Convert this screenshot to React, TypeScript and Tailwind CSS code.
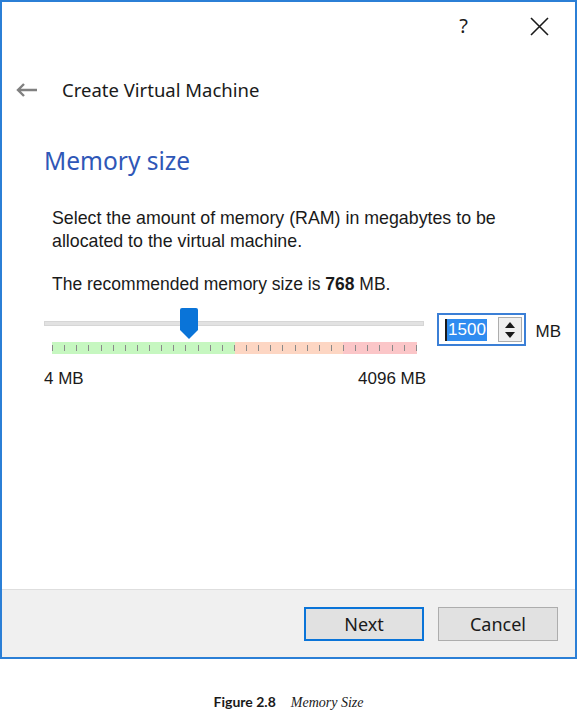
import React from 'react';

const ticks = Array.from({ length: 31 }, (_, i) => i);

const App: React.FC = () => {
  return (
    <div className="w-[577px] h-[710px] bg-white overflow-hidden">
      {/* Dialog window */}
      <div className="w-[577px] h-[659px] border-2 border-[#2b7fd6] flex flex-col bg-white">
        {/* Title bar */}
        <div className="h-[50px] flex items-start justify-end pr-[26px] pt-[12px] gap-[62px] text-[#1a1a1a]">
          <span className="font-['Noto_Sans',sans-serif] text-[20px] leading-[24px]">?</span>
          <svg width="19" height="19" viewBox="0 0 19 19" className="mt-[3px]">
            <path d="M1 1 L18 18 M18 1 L1 18" stroke="#1a1a1a" strokeWidth="1.6" fill="none" />
          </svg>
        </div>

        {/* Header */}
        <div className="flex items-center h-[30px] mt-[23px] pl-[13px]">
          <svg width="23" height="16" viewBox="0 0 23 16">
            <path d="M22 8 H3 M9 2 L3 8 L9 14" stroke="#808080" strokeWidth="2.4" fill="none" />
          </svg>
          <span className="ml-[24px] font-['Noto_Sans',sans-serif] text-[18.5px] text-[#1a1a1a]">Create Virtual Machine</span>
        </div>

        {/* Page body */}
        <div className="flex-1 flex flex-col pl-[42px] pr-[14px]">
          <h1 className="mt-[40px] font-['Noto_Sans',sans-serif] text-[24.5px] leading-[32px] text-[#2f57b7]">Memory size</h1>

          <div className="pl-[8px] mt-[30px] font-['Liberation_Sans',sans-serif] text-[17.8px] leading-[23px] text-[#1a1a1a]">
            <p>Select the amount of memory (RAM) in megabytes to be<br />allocated to the virtual machine.</p>
            <p className="mt-[20px] text-[17.5px]">The recommended memory size is <b>768</b> MB.</p>
          </div>

          {/* Slider row */}
          <div className="flex items-start mt-[12px]">
            <div className="w-[385px] flex flex-col">
              <div className="relative h-[34px]">
                <div className="absolute left-0 right-[2px] top-[13px] h-[5px] bg-[#e2e2e2] border border-[#d6d6d6]" />
                <svg width="20" height="31" viewBox="0 0 20 31" className="absolute left-[135px] top-0">
                  <path d="M1 2 Q1 0 3 0 H17 Q19 0 19 2 V22 L10 31 L1 22 Z" fill="#0a74d8" />
                </svg>
              </div>
              <div className="ml-[8px] w-[365px] h-[12px] flex">
                <div className="w-[183px] bg-[#c6f7c0]" />
                <div className="w-[108px] bg-[#fdd6c3]" />
                <div className="flex-1 bg-[#fbc6c8]" />
              </div>
              <div className="ml-[8px] w-[365px] h-[12px] -mt-[12px] flex justify-between items-center">
                {ticks.map(i => (
                  <div key={i} className="w-px h-[6px] bg-[#8a8a8a]" />
                ))}
              </div>
              <div className="flex justify-between mt-[12px] font-['Liberation_Sans',sans-serif] text-[17px] text-[#1a1a1a]">
                <span>4 MB</span>
                <span>4096 MB</span>
              </div>
            </div>

            <div className="ml-[11px] mt-[5px] w-[89px] h-[33px] border-2 border-[#3b7fd6] flex items-center pl-[6px] pr-[2px]">
              <span className="bg-[#2f8cf0] text-white font-['Liberation_Sans',sans-serif] text-[17px] leading-[22px] px-[1px] border-l-2 border-[#1a1a1a]">1500</span>
              <div className="ml-auto w-[24px] h-[25px] border border-[#adadad] bg-[#f0f0f0] flex flex-col items-center justify-center gap-[4px]">
                <svg width="10" height="6" viewBox="0 0 10 6"><path d="M0 6 L5 0 L10 6 Z" fill="#1a1a1a" /></svg>
                <svg width="10" height="6" viewBox="0 0 10 6"><path d="M0 0 L5 6 L10 0 Z" fill="#1a1a1a" /></svg>
              </div>
            </div>
            <span className="ml-[10px] mt-[11px] font-['Liberation_Sans',sans-serif] text-[17px] text-[#1a1a1a]">MB</span>
          </div>
        </div>

        {/* Footer */}
        <div className="h-[68px] bg-[#f0f0f0] border-t border-[#dedede] flex items-start justify-end gap-[14px] pr-[17px] pt-[17px]">
          <button className="w-[120px] h-[34px] bg-[#e1e1e1] border-2 border-[#0a74d8] font-['Noto_Sans',sans-serif] text-[18px] text-[#1a1a1a]">Next</button>
          <button className="w-[120px] h-[34px] bg-[#e1e1e1] border border-[#adadad] font-['Noto_Sans',sans-serif] text-[18px] text-[#1a1a1a]">Cancel</button>
        </div>
      </div>

      {/* Caption */}
      <div className="flex justify-center items-baseline mt-[33px] gap-[15px] text-[#1a1a1a] leading-[20px]">
        <span className="font-['Lato',sans-serif] font-bold text-[14px]">Figure 2.8</span>
        <span className="font-['Liberation_Serif',serif] italic text-[14px]">Memory Size</span>
      </div>
    </div>
  );
};

export default App;
